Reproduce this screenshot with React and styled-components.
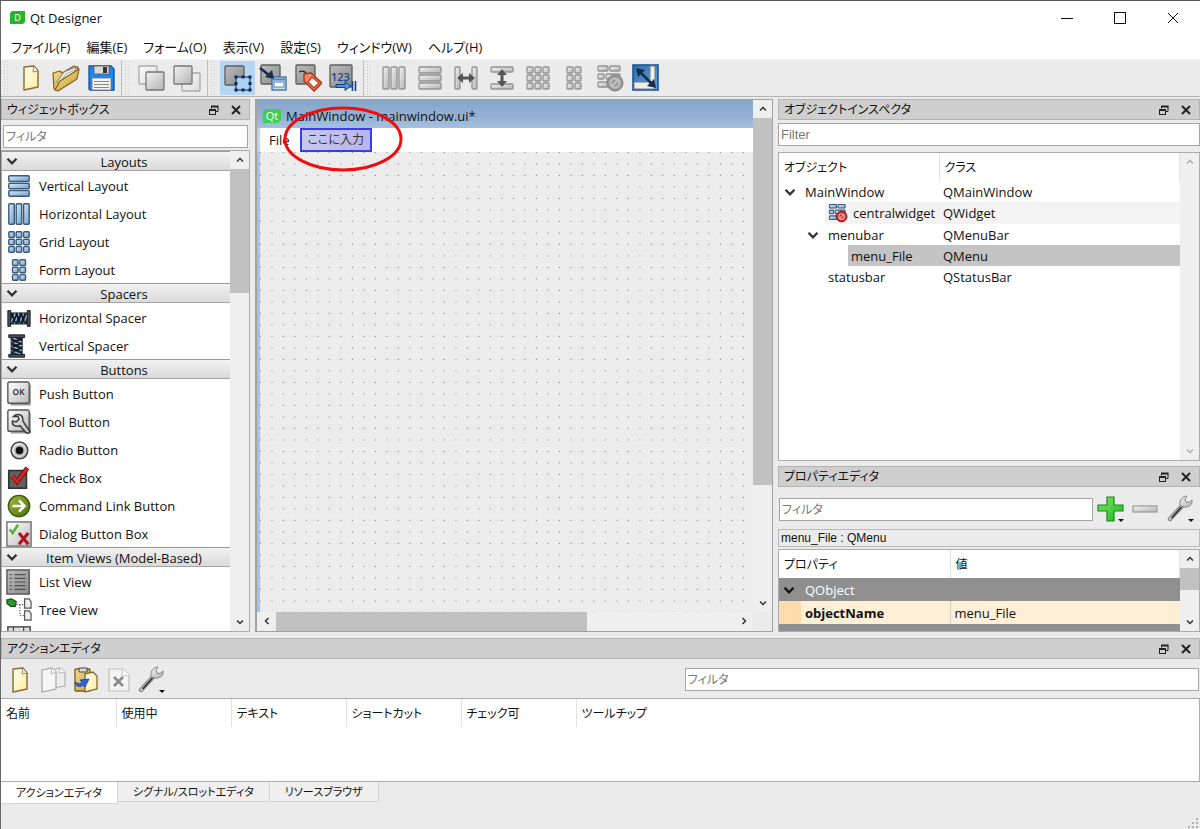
import React from 'react'
import styled, { createGlobalStyle, css } from 'styled-components'

const GlobalStyle = createGlobalStyle`
  * {
    box-sizing: border-box;
  }

  body {
    margin: 0;
    background: #ebebeb;
    color: #111;
    font-family: 'Open Sans', 'Noto Sans CJK JP', sans-serif;
    font-size: 13px;
    line-height: 20px;
    font-feature-settings: 'palt';
  }

  button, input, table {
    font: inherit;
    color: inherit;
    font-feature-settings: inherit;
  }

  button {
    padding: 0;
    border: none;
    background: none;
  }

  svg {
    display: block;
    flex: none;
  }
`

/* ---------- shell ---------- */

const Shell = styled.div`
  display: flex;
  flex-direction: column;
  height: 100vh;
  border-top: 1px solid #555;
  border-left: 1px solid #666;
  overflow: hidden;
`

const TitleBar = styled.header`
  display: flex;
  align-items: center;
  flex: none;
  gap: 5px;
  height: 33px;
  padding: 0 3px 0 9px;
  background: #fff;

  > h1 {
    flex: 1;
    margin: 0;
    font-size: 13px;
    font-weight: 400;
  }
`

const WindowButton = styled.button`
  display: flex;
  align-items: center;
  justify-content: center;
  width: 48px;
  height: 32px;
`

const MenuBar = styled.nav`
  display: flex;
  align-items: center;
  flex: none;
  gap: 16px;
  height: 25px;
  padding-left: 10px;
  background: #fff;
`

const ToolBar = styled.div`
  display: flex;
  flex: none;
  height: 38px;
  border-top: 1px solid #f4f4f4;
  border-bottom: 1px solid #b4b4b4;
`

const ToolButton = styled.button`
  display: flex;
  align-items: center;
  justify-content: center;
  width: 36px;
  height: 34px;
  background: ${p => (p.$checked ? '#b5d5f2' : 'transparent')};
`

const ToolGroup = styled.div`
  display: flex;
  align-items: center;
  padding: 0 3px 0 12px;
  border-right: ${p => (p.$last ? 'none' : '1px solid #bdbdbd')};
  background: radial-gradient(circle, #c4c4c4 1px, transparent 1px) 2px 0 / 3px 3px repeat-y,
    radial-gradient(circle, #d0d0d0 1px, transparent 1px) 5px 0 / 3px 3px repeat-y;

  > button {
    width: ${p => (p.$last ? 36 : 35)}px;
  }
`

const Workspace = styled.main`
  display: flex;
  flex: 1;
  min-height: 0;
  gap: 5px;
  padding-top: 2px;
`

/* ---------- docks ---------- */

const Dock = styled.section`
  display: flex;
  flex-direction: column;
  min-height: 0;
  flex: ${p => (p.$grow ? '1' : 'none')};
`

const DockTitle = styled.div`
  display: flex;
  align-items: center;
  flex: none;
  height: 21px;
  padding: 1px 2px 0 5px;
  border: 1px solid #b3b3b3;
  background: #cfcfcf;

  > h2 {
    flex: 1;
    margin: 0;
    font-size: 12px;
    font-weight: 400;
  }

  > button {
    display: flex;
    align-items: center;
    justify-content: center;
    width: 24px;
    height: 18px;
    margin-right: -1px;
  }
`

const Filter = styled.input`
  display: block;
  flex: ${p => (p.$grow ? '1' : 'none')};
  width: auto;
  min-width: 0;
  height: 23px;
  padding: 0 2px;
  border: 1px solid #a5a5a5;
  border-radius: 0;
  background: #fff;
  font-family: ${p => (p.$plain ? "'Liberation Sans', sans-serif" : 'inherit')};
  font-size: ${p => (p.$plain ? '13px' : '12px')};

  &::placeholder {
    color: #777;
    opacity: 1;
  }
`

const Frame = styled.div`
  display: flex;
  flex: ${p => (p.$grow ? '1' : 'none')};
  min-height: 0;
  border: 1px solid #ababab;
  background: #fff;
  overflow: hidden;
`

/* ---------- scroll bars ---------- */

const ScrollTrack = styled.div`
  display: flex;
  flex: none;
  flex-direction: ${p => (p.$horizontal ? 'row' : 'column')};
  ${p => (p.$horizontal ? 'height: 19px;' : 'width: 19px;')}
  background: #efefef;

  > button {
    display: flex;
    align-items: center;
    justify-content: center;
    flex: none;
    width: 19px;
    height: 18px;
  }

  > .thumb {
    flex: ${p => p.$size};
    background: #c1c1c1;
  }

  > .rest {
    flex: ${p => 100 - p.$size};
  }
`

const turns = { down: 0, up: 180, left: 90, right: 270 }

function Chevron ({ to = 'down', size = 8, color = '#333', weight = 2 }) {
  return (
    <svg width={size} height={size} viewBox='0 0 8 8'>
      <path
        d='M1 2.5 L4 5.5 L7 2.5'
        transform={`rotate(${turns[to]} 4 4)`}
        fill='none'
        stroke={color}
        strokeWidth={weight}
      />
    </svg>
  )
}

const Branch = ({ color }) => <Chevron size={12} color={color} weight={1.6} />

function ScrollBar ({ horizontal, size = 0, disabled }) {
  const color = disabled ? '#aaa' : '#333'
  return (
    <ScrollTrack $horizontal={horizontal} $size={size}>
      <button aria-label={horizontal ? 'Scroll left' : 'Scroll up'} disabled={disabled}>
        <Chevron to={horizontal ? 'left' : 'up'} color={color} weight={1.5} />
      </button>
      {size > 0 && <div className='thumb' />}
      <div className='rest' />
      <button aria-label={horizontal ? 'Scroll right' : 'Scroll down'} disabled={disabled}>
        <Chevron to={horizontal ? 'right' : 'down'} color={color} weight={1.5} />
      </button>
    </ScrollTrack>
  )
}

/* ---------- icons ---------- */

const gradients = {
  gray: ['#f4f4f4', '#b2b2b2'],
  pale: ['#fbfbfb', '#dcdcdc'],
  steel: ['#bcbcbc', '#8c8c8c'],
  blue: ['#d9ecfb', '#6f9fcb'],
  paper: ['#fffef0', '#ffee9c'],
  gold: ['#f7e08c', '#c99a35'],
  green: ['#7fe860', '#1fb51f'],
  olive: ['#a2bd3c', '#4c6d10'],
  key: ['#ffffff', '#b9b9b9'],
  navy: ['#2f6cae', '#69a5df']
}

function Gradients () {
  return (
    <svg width='0' height='0' style={{ position: 'absolute' }} aria-hidden='true'>
      <defs>
        {Object.entries(gradients).map(([name, [from, to]]) => (
          <linearGradient key={name} id={name} x1='0' y1='0' x2='1' y2='1'>
            <stop offset='0' stopColor={from} />
            <stop offset='1' stopColor={to} />
          </linearGradient>
        ))}
      </defs>
    </svg>
  )
}

function Icon ({ size = 28, box = 28, children }) {
  return (
    <svg width={size} height={size} viewBox={`0 0 ${box} ${box}`} aria-hidden='true'>
      {children}
    </svg>
  )
}

// Bars and cells shared by the toolbar and the widget box
function Blocks ({ rects, tone = 'gray' }) {
  return rects.map(([x, y, w, h]) => (
    <rect
      key={`${x}-${y}`}
      x={x}
      y={y}
      width={w}
      height={h}
      rx='1'
      fill={`url(#${tone})`}
      stroke={tone === 'gray' ? '#929292' : '#3d5977'}
      strokeWidth={tone === 'gray' ? 1.3 : 1.5}
    />
  ))
}

const columns = [[3, 3, 6, 22], [11, 3, 6, 22], [19, 3, 6, 22]]
const lines = [[3, 3, 22, 6], [3, 11, 22, 6], [3, 19, 22, 6]]
const cells = [3, 11, 19].flatMap(y => [3, 11, 19].map(x => [x, y, 6, 6]))
const pairs = [3, 11, 19].flatMap(y => [7, 15].map(x => [x, y, 6, 6]))
const broken = [[2, 2, 10, 5], [14, 2, 10, 5], [2, 10, 6, 5], [10, 10, 14, 5], [2, 18, 10, 5]]

function Square ({ x, y, size, tone = 'steel', stroke = '#5c5c5c' }) {
  return <rect x={x} y={y} width={size} height={size} rx='1' fill={`url(#${tone})`} stroke={stroke} strokeWidth='1.3' />
}

function Page ({ tone = 'paper', stroke = '#8a6a33', x = 0 }) {
  return (
    <g transform={`translate(${x} 0)`} stroke={stroke} strokeLinejoin='round'>
      <path d='M7 3 L17 2 L21 7 V23 L7 26 Z' fill={`url(#${tone})`} strokeWidth='1.4' />
      <path d='M17 2 L16 8 L21 7 Z' fill='#fff' strokeWidth='0.8' />
    </g>
  )
}

function Wrench () {
  return (
    <g strokeLinecap='round' fill='none'>
      <path d='M3 24 L15 11' stroke='#777' strokeWidth='4.4' />
      <path d='M3 24 L15 11' stroke='#c4c4c4' strokeWidth='2.6' />
      <path d='M5 22.5 L14 12.5' stroke='#2b2b2b' strokeWidth='1.6' />
      <path
        d='M13 10 C12 5 16 1 20 1 L18 4 L19 7 L22 7.5 L25 5 C26 9 22 13 17 12 Z'
        fill='url(#gray)'
        stroke='#858585'
        strokeWidth='1'
      />
    </g>
  )
}

const MenuMark = () => <path d='M21 24 H27 L24 27 Z' fill='#111' />

const NewIcon = () => <Icon><Page /></Icon>

const OpenIcon = () => (
  <Icon>
    <g strokeLinejoin='round' strokeWidth='1.2' stroke='#86601d'>
      <path d='M1 9 L8 7 L10 9 L22 2 L26 3 L24 12 L5 26 L2 25 Z' fill='url(#gold)' />
      <path d='M5 18 L12 8 L24 3 L23 10 L8 21 Z' fill='#f5f5f5' stroke='#8b8b8b' />
      <path d='M7 20 L14 10 L25 5' fill='none' stroke='#b5b5b5' />
      <path d='M3 26 L8 17 L27 5 L25 15 L6 27 Z' fill='url(#gold)' />
    </g>
  </Icon>
)

const SaveIcon = () => (
  <Icon>
    <path d='M2 2 H24 L27 5 V26 H3 L2 25 Z' fill='#2185ee' stroke='#154f9e' strokeWidth='1.3' />
    <rect x='7' y='2' width='15' height='8' fill='#d9d9d9' stroke='#555' strokeWidth='0.8' />
    <rect x='16' y='3' width='4' height='6' fill='#333' />
    <rect x='5' y='14' width='19' height='12' fill='#f3f3f3' stroke='#777' strokeWidth='0.8' />
    <path d='M7 17.5 H22 M7 20.5 H22 M7 23.5 H22' stroke='#888' strokeWidth='1.2' />
  </Icon>
)

const ToBackIcon = () => (
  <Icon>
    <Square x={1} y={2} size={18} tone='pale' stroke='#aaa' />
    <Square x={8} y={8} size={18} tone='gray' stroke='#777' />
  </Icon>
)

const ToFrontIcon = () => (
  <Icon>
    <Square x={9} y={9} size={18} tone='pale' stroke='#aaa' />
    <Square x={1} y={2} size={18} tone='gray' stroke='#777' />
  </Icon>
)

const EditWidgetsIcon = () => (
  <Icon>
    <Square x={1} y={2} size={19} />
    <rect x='12' y='13' width='14' height='13' fill='#a9d1f5' stroke='#1d4373' strokeWidth='1.2' />
    {[12, 19, 26].flatMap(x => [13, 19.5, 26].map(y => (
      (x !== 19 || y !== 19.5) && <rect key={`${x}-${y}`} x={x - 1.5} y={y - 1.5} width='3' height='3' fill='#10294a' />
    )))}
  </Icon>
)

const SignalsIcon = () => (
  <Icon>
    <Square x={2} y={1} size={19} />
    <rect x='13' y='13' width='14' height='13' fill='#c4def5' stroke='#41699c' strokeWidth='1.3' />
    <rect x='15' y='18' width='10' height='5' fill='#fff' stroke='#5685b9' strokeWidth='1' />
    <path d='M14 15.5 H26' stroke='#4884c8' strokeWidth='2' />
    <path d='M1 4 L11 12' stroke='#172d4c' strokeWidth='2.6' />
    <path d='M15 15 L6 13 L13 6 Z' fill='#172d4c' />
  </Icon>
)

const BuddiesIcon = () => (
  <Icon>
    <Square x={2} y={1} size={19} />
    <path d='M5 8 C9 6 13 8 14 13' fill='none' stroke='#222' strokeWidth='1.2' />
    <path d='M10 10 L17 9 L28 19 L20 27 L10 17 Z' fill='#f0885c' stroke='#a83218' strokeWidth='1.3' />
    <path d='M18 13 L25 19 L20 24 L14 18 Z' fill='#fff' stroke='#db3b20' strokeWidth='1.5' />
  </Icon>
)

const TabOrderIcon = () => (
  <Icon>
    <Square x={1} y={1} size={22} />
    <text x='2' y='17' fontSize='11' fontFamily='Open Sans, sans-serif' fontWeight='600' fill='#144a8c'>123</text>
    <path d='M7 20.5 H16 V17.5 L22 22 L16 26.5 V23.5 H7 Z' fill='#4c92e0' stroke='#14437d' strokeWidth='1' />
    <path d='M23.5 17 V27 M26.5 17 V27' stroke='#14437d' strokeWidth='1.6' />
  </Icon>
)

const SplitHIcon = () => (
  <Icon>
    <Blocks rects={[[3, 3, 5, 22], [20, 3, 5, 22]]} />
    <path d='M5 14 L11 9 V12.5 H17 V9 L23 14 L17 19 V15.5 H11 V19 Z' fill='#555' />
  </Icon>
)

const SplitVIcon = () => (
  <Icon>
    <Blocks rects={[[3, 3, 22, 5], [3, 20, 22, 5]]} />
    <path d='M14 5 L19 11 H15.5 V17 H19 L14 23 L9 17 H12.5 V11 H9 Z' fill='#555' />
  </Icon>
)

const BreakIcon = () => (
  <Icon>
    <Blocks rects={broken} />
    <circle cx='19' cy='19' r='8' fill='#999' stroke='#808080' />
    <circle cx='19' cy='19' r='4.5' fill='none' stroke='#c2c2c2' strokeWidth='2' />
    <path d='M16 22 L22 16' stroke='#c2c2c2' strokeWidth='2' />
  </Icon>
)

const AdjustIcon = () => (
  <Icon>
    <rect x='1' y='1' width='25' height='25' fill='url(#navy)' stroke='#1b5597' strokeWidth='1.6' />
    <path d='M18 2 H23 V25 H2 V18 H18 Z' fill='#eee' stroke='#777' strokeWidth='1' />
    <path d='M8 8 L20 20' stroke='#14304f' strokeWidth='2.6' />
    <path d='M4 4 L13 6 L6 13 Z M24 24 L15 22 L22 15 Z' fill='#14304f' />
  </Icon>
)

const CopyIcon = () => (
  <Icon>
    <path d='M13 4 L21 2 L26 6 V20 L13 22 Z' fill='#ededed' stroke='#b0b0b0' strokeWidth='1.2' />
    <path d='M21 2 L20 7 L26 6' fill='#fafafa' stroke='#b0b0b0' strokeWidth='0.8' />
    <path d='M3 4 L13 2 L17 6 V23 L3 26 Z' fill='#f5f5f5' stroke='#a5a5a5' strokeWidth='1.2' />
    <path d='M13 2 L12 8 L17 6' fill='#fff' stroke='#a5a5a5' strokeWidth='0.8' />
  </Icon>
)

const PasteIcon = () => (
  <Icon>
    <rect x='3' y='3' width='15' height='22' rx='1' fill='url(#gold)' stroke='#7b5920' strokeWidth='1.3' />
    <path d='M7 2 H15 V6 H7 Z' fill='#ddd' stroke='#444' />
    <path d='M13 8 L21 6 L25 10 V23 L13 26 Z' fill='url(#paper)' stroke='#8a6a33' strokeWidth='1.3' />
    <path d='M3 16 C4 22 9 21 11 19 L13 21 L17 13 L8 14 L10 16 C8 18 6 18 3 16 Z' fill='#2c63e0' stroke='#143b96' strokeWidth='0.8' />
  </Icon>
)

const DeleteIcon = () => (
  <Icon>
    <path d='M4 3 H18 L24 9 V25 H4 Z' fill='#f3f3f3' stroke='#bdbdbd' strokeWidth='1.2' />
    <path d='M18 3 L17 10 L24 9' fill='#fff' stroke='#c8c8c8' />
    <path d='M9 11 L18 20 M18 11 L9 20' stroke='#8a8a8a' strokeWidth='2.6' />
  </Icon>
)

const ConfigIcon = () => <Icon><Wrench /><MenuMark /></Icon>

const AddIcon = () => (
  <Icon>
    <path d='M10 2 H17 V10 H26 V16 H17 V26 H10 V16 H1 V10 H10 Z' fill='url(#green)' stroke='#168a1a' strokeWidth='1.2' />
    <MenuMark />
  </Icon>
)

const RemoveIcon = () => (
  <Icon>
    <rect x='1' y='11' width='24' height='6' fill='url(#gray)' stroke='#999' strokeWidth='1.2' />
  </Icon>
)

const BlocksIcon = ({ rects, tone, size }) => <Icon size={size}><Blocks rects={rects} tone={tone} /></Icon>

const Spring = () => (
  <g>
    <path d='M5 8 H23 V21 H5 Z' fill='#1d2733' />
    <path d='M5 19 L10 9 M9 20 L14 9 M14 20 L19 9 M19 20 L23 10' stroke='#8fb4da' strokeWidth='1.5' />
    <path d='M6 9 L10 19 M11 9 L15 19 M16 9 L20 19' stroke='#0a0d12' strokeWidth='1.5' />
    <path d='M2 6 H5 V23 H2 Z M23 6 H26 V23 H23 Z' fill='#4c4f52' stroke='#16181a' />
  </g>
)

const HSpacerIcon = () => <Icon size={26}><Spring /></Icon>

const VSpacerIcon = () => (
  <Icon size={26}>
    <g transform='translate(-2 0) rotate(90 14 14)'><Spring /></g>
  </Icon>
)

const Key = () => (
  <g>
    <path d='M5 25.5 H26 V4' fill='none' stroke='#999' strokeWidth='1.5' />
    <rect x='2' y='1' width='23' height='23' rx='2' fill='url(#key)' stroke='#555' strokeWidth='1.5' />
  </g>
)

const PushIcon = () => (
  <Icon size={26}>
    <Key />
    <text x='13.5' y='15' textAnchor='middle' fontSize='9' fontWeight='600' fontFamily='Open Sans, sans-serif' fill='#222'>OK</text>
  </Icon>
)

const ToolIcon = () => (
  <Icon size={26}>
    <Key />
    <path
      d='M8 8 C12 4 19 6 18 12 C19 15 23 20 26 24 C25 27 22 26 21 25 L15 18 C10 20 6 17 7 13 L11 14 L14 11 L13 8 Z'
      fill='url(#gray)'
      stroke='#3c3c3c'
      strokeWidth='1.6'
    />
  </Icon>
)

const RadioIcon = () => (
  <Icon size={26}>
    <circle cx='14.5' cy='14.5' r='9' fill='url(#gray)' stroke='#444' strokeWidth='1.6' />
    <circle cx='14.5' cy='14.5' r='6' fill='#aaa' stroke='#eee' strokeWidth='0.8' />
    <circle cx='14.5' cy='14.5' r='4' fill='#111' />
  </Icon>
)

const CheckIcon = () => (
  <Icon size={26}>
    <rect x='3' y='6' width='19' height='19' fill='#606060' stroke='#333' strokeWidth='1.8' />
    <path d='M7 12 L12 18 L23 3' fill='none' stroke='#7c0e0e' strokeWidth='5' />
    <path d='M7 12 L12 18 L23 3' fill='none' stroke='#d92525' strokeWidth='3' />
  </Icon>
)

const CommandIcon = () => (
  <Icon size={26}>
    <circle cx='14' cy='14' r='11.5' fill='url(#olive)' stroke='#3c5410' strokeWidth='1.5' />
    <path d='M7 14 H19 M14 8 L20 14 L14 20' fill='none' stroke='#fff' strokeWidth='2.8' />
  </Icon>
)

const DialogIcon = () => (
  <Icon size={26}>
    <rect x='1' y='1' width='26' height='26' fill='url(#key)' stroke='#777' strokeWidth='1.6' />
    <path d='M4 9 L7 13 L13 4' fill='none' stroke='#4fb52c' strokeWidth='2.6' />
    <path d='M14 13 L24 25 M24 13 L14 25' stroke='#b31320' strokeWidth='3.4' />
  </Icon>
)

const ListIcon = () => (
  <Icon size={26}>
    <rect x='1' y='1' width='24' height='26' fill='url(#steel)' stroke='#555' strokeWidth='1.5' />
    <path
      d='M4 6 H6 M4 10 H6 M4 14 H6 M4 18 H6 M4 22 H6 M9 6 H21 M9 10 H21 M9 14 H21 M9 18 H21 M9 22 H21'
      stroke='#505050'
      strokeWidth='1.3'
    />
  </Icon>
)

const TreeIcon = () => (
  <Icon size={26}>
    <path d='M1 3 L6 2 L11 5 L10 10 L5 10 L1 7 Z' fill='#2b9a2b' stroke='#154f15' strokeWidth='1.3' />
    <path d='M11 8 H20 M15 8 V20 M15 20 H20' stroke='#444' strokeDasharray='1.5 1.5' fill='none' />
    <path d='M20 2 H25 L27 5 V12 H20 Z M20 15 H25 L27 18 V25 H20 Z' fill='#eee' stroke='#555' strokeWidth='1.3' />
  </Icon>
)

const TableIcon = () => (
  <Icon size={26}>
    <rect x='2' y='2' width='24' height='24' fill='#ddd' stroke='#444' strokeWidth='1.5' />
    <path d='M2 7 H26 M2 13 H26 M8 2 V26 M19 2 V26' stroke='#444' strokeWidth='1.3' />
  </Icon>
)

const BrokenLayoutIcon = () => (
  <Icon size={20}>
    <Blocks rects={broken} tone='blue' />
    <circle cx='19' cy='19' r='7.5' fill='#ca2a26' stroke='#7f1515' strokeWidth='1.3' />
    <circle cx='19' cy='19' r='4' fill='none' stroke='#e9b9b4' strokeWidth='1.6' />
    <path d='M16 22 L22 16' stroke='#e9b9b4' strokeWidth='1.6' />
  </Icon>
)

const FloatIcon = () => (
  <svg width='11' height='11' viewBox='0 0 11 11' fill='none' stroke='#222'>
    <path d='M3.5 3.5 V1.5 H10 V6.5 H7.5' />
    <path d='M3 1.5 H10.5' strokeWidth='2' />
    <rect x='1.5' y='4.5' width='6' height='5' />
    <path d='M1 5 H8' strokeWidth='2' />
  </svg>
)

const CloseIcon = () => (
  <svg width='10' height='10' viewBox='0 0 10 10'>
    <path d='M1 1 L9 9 M9 1 L1 9' stroke='#222' strokeWidth='2' />
  </svg>
)

function DockHeader ({ children }) {
  return (
    <DockTitle>
      <h2>{children}</h2>
      <button aria-label='Float'><FloatIcon /></button>
      <button aria-label='Close'><CloseIcon /></button>
    </DockTitle>
  )
}

/* ---------- widget box ---------- */

const LeftColumn = styled.div`
  display: flex;
  flex: 0 0 249px;
  flex-direction: column;

  > section > input {
    margin: 5px 2px 2px;
  }
`

const WidgetList = styled.div`
  flex: 1;
  min-width: 0;
  overflow: hidden;
`

const Category = styled.button`
  display: flex;
  align-items: center;
  width: 100%;
  height: 20px;
  padding: 0 4px;
  border-top: 1px solid #999;
  border-bottom: 1px solid #a4a4a4;
  background: linear-gradient(#f2f2f2, #dadada);

  > span {
    flex: 1;
    padding-left: 4px;
    padding-top: 2px;
  }
`

const WidgetItem = styled.div`
  display: flex;
  align-items: center;
  gap: 7px;
  height: 28px;
  padding: 1px 0 0 4px;

  > .icon {
    display: flex;
    justify-content: center;
    width: 26px;
  }
`

const categories = [
  ['Layouts', [
    ['Vertical Layout', <BlocksIcon rects={lines} tone='blue' size={26} />],
    ['Horizontal Layout', <BlocksIcon rects={columns} tone='blue' size={26} />],
    ['Grid Layout', <BlocksIcon rects={cells} tone='blue' size={26} />],
    ['Form Layout', <BlocksIcon rects={pairs} tone='blue' size={26} />]
  ]],
  ['Spacers', [
    ['Horizontal Spacer', <HSpacerIcon />],
    ['Vertical Spacer', <VSpacerIcon />]
  ]],
  ['Buttons', [
    ['Push Button', <PushIcon />],
    ['Tool Button', <ToolIcon />],
    ['Radio Button', <RadioIcon />],
    ['Check Box', <CheckIcon />],
    ['Command Link Button', <CommandIcon />],
    ['Dialog Button Box', <DialogIcon />]
  ]],
  ['Item Views (Model-Based)', [
    ['List View', <ListIcon />],
    ['Tree View', <TreeIcon />],
    ['', <TableIcon />]
  ]]
]

function WidgetBox () {
  return (
    <LeftColumn>
      <Dock $grow>
        <DockHeader>ウィジェットボックス</DockHeader>
        <Filter placeholder='フィルタ' aria-label='フィルタ' />
        <Frame $grow>
          <WidgetList>
            {categories.map(([title, items]) => (
              <React.Fragment key={title}>
                <Category>
                  <Branch />
                  <span>{title}</span>
                </Category>
                {items.map(([name, icon]) => (
                  <WidgetItem key={name}>
                    <span className='icon'>{icon}</span>
                    {name}
                  </WidgetItem>
                ))}
              </React.Fragment>
            ))}
          </WidgetList>
          <ScrollBar size={28} />
        </Frame>
      </Dock>
    </LeftColumn>
  )
}

/* ---------- form window ---------- */

const FormArea = styled.div`
  display: flex;
  flex: 1;
  flex-direction: column;
  min-width: 0;
  border: 1px solid #a2a2a2;
  border-left-width: 2px;

  > .row {
    display: flex;
    flex: 1;
    min-height: 0;
  }

  > .bottom {
    display: flex;
    flex: none;
    padding-right: 19px;
  }

  > .bottom > div {
    flex: 1;
  }
`

const FormWindow = styled.div`
  display: flex;
  flex: 1;
  flex-direction: column;
  min-width: 0;
`

const FormTitle = styled.div`
  display: flex;
  align-items: center;
  flex: none;
  gap: 5px;
  height: 28px;
  padding: 4px 0 0 6px;
  background: linear-gradient(#86a6ca, #94b1d3 60%, #a5c1e2);
`

const FormMenu = styled.div`
  position: relative;
  display: flex;
  align-items: center;
  flex: none;
  gap: 10px;
  height: 24px;
  padding-left: 9px;
  border-left: 3px solid #bcd4ee;
  background: #fff;
`

const TypeHere = styled.button`
  height: 24px;
  padding: 0 6px;
  border: 2px solid #3a3aee;
  background: linear-gradient(100deg, #c9c9ee, #b5b5ee);
  color: #333;
  font-size: 12px;
`

const Highlight = styled.svg`
  position: absolute;
  top: -22px;
  left: 22px;
  z-index: 1;
  pointer-events: none;
`

const Canvas = styled.div`
  flex: 1;
  min-height: 0;
  border-left: 3px solid #a3c3e8;
  background: #ececec;

  > svg {
    width: 100%;
    height: 100%;
  }
`

function FormEditor () {
  return (
    <FormArea>
      <div className='row'>
        <FormWindow>
          <FormTitle>
            <svg width='18' height='14' viewBox='0 0 18 14'>
              <path d='M3 0 H18 V11 L15 14 H0 V3 Z' fill='#41cd52' />
              <text x='9' y='11' textAnchor='middle' fontSize='11' fontFamily='Open Sans, sans-serif' fill='#fff'>Qt</text>
            </svg>
            MainWindow - mainwindow.ui*
          </FormTitle>
          <FormMenu>
            <span>File</span>
            <TypeHere>ここに入力</TypeHere>
            <Highlight width='122' height='66' viewBox='0 0 122 66'>
              <ellipse cx='61' cy='33' rx='58' ry='31' fill='none' stroke='#f40b0b' strokeWidth='3' />
            </Highlight>
          </FormMenu>
          <Canvas>
            <svg>
              <pattern id='grid' width='10' height='10' patternUnits='userSpaceOnUse' patternTransform='translate(1 1) scale(1.15)'>
                <rect x='9' y='9' width='1' height='1' fill='#8e8e8e' />
              </pattern>
              <rect width='100%' height='100%' fill='url(#grid)' />
            </svg>
          </Canvas>
        </FormWindow>
        <ScrollBar size={77} />
      </div>
      <div className='bottom'>
        <ScrollBar horizontal size={68} />
      </div>
    </FormArea>
  )
}

/* ---------- object inspector and property editor ---------- */

const RightColumn = styled.div`
  display: flex;
  flex: 0 0 422px;
  flex-direction: column;
  gap: 5px;
`

const InspectorFilter = styled.div`
  display: flex;
  padding: 3px 0 6px;
`

const Table = styled.table`
  flex: 1;
  align-self: flex-start;
  width: 100%;
  min-width: 0;
  border-collapse: collapse;
  table-layout: fixed;

  th {
    height: 28px;
    padding: 2px 4px 0 5px;
    border-right: 1px solid #e2e2e2;
    font-size: 12px;
    font-weight: 400;
    text-align: left;
  }

  td {
    padding: 0;
    white-space: nowrap;
  }
`

const TreeCell = styled.div`
  display: flex;
  height: ${p => p.$height}px;

  > .branch {
    display: flex;
    align-items: center;
    justify-content: flex-end;
    flex: none;
    width: ${p => p.$depth * 23}px;
    padding-right: 6px;
  }

  > .name {
    display: flex;
    align-items: center;
    flex: 1;
    gap: 5px;
    padding-left: 3px;
    background: ${p => p.$fill};
  }
`

const ClassCell = styled.td`
  && {
    padding-left: 4px;
    background: ${p => p.$fill};
  }
`

const objects = [
  { name: 'MainWindow', type: 'QMainWindow', depth: 1, open: true, height: 21 },
  { name: 'centralwidget', type: 'QWidget', depth: 2, icon: true, height: 22, fill: '#f3f3f3' },
  { name: 'menubar', type: 'QMenuBar', depth: 2, open: true, height: 21 },
  { name: 'menu_File', type: 'QMenu', depth: 3, height: 21, fill: '#c4c4c4' },
  { name: 'statusbar', type: 'QStatusBar', depth: 2, height: 21 }
]

function ObjectInspector () {
  return (
    <Dock $grow>
      <DockHeader>オブジェクトインスペクタ</DockHeader>
      <InspectorFilter>
        <Filter $grow $plain placeholder='Filter' aria-label='Filter' />
      </InspectorFilter>
      <Frame $grow>
        <Table>
          <colgroup>
            <col width='160' />
            <col />
          </colgroup>
          <thead>
            <tr>
              <th>オブジェクト</th>
              <th>クラス</th>
            </tr>
          </thead>
          <tbody>
            {objects.map(({ name, type, depth, open, icon, height, fill }) => (
              <tr key={name}>
                <td>
                  <TreeCell $depth={depth} $height={height} $fill={fill}>
                    <span className='branch'>{open && <Branch />}</span>
                    <span className='name'>
                      {icon && <BrokenLayoutIcon />}
                      {name}
                    </span>
                  </TreeCell>
                </td>
                <ClassCell $fill={fill}>{type}</ClassCell>
              </tr>
            ))}
          </tbody>
        </Table>
        <ScrollBar disabled />
      </Frame>
    </Dock>
  )
}

const PropertyTools = styled.div`
  display: flex;
  align-items: center;
  height: 42px;
  padding: 2px 2px 0 1px;

  > button {
    width: 35px;
  }
`

const ObjectLabel = styled.div`
  height: 18px;
  margin-bottom: 2px;
  padding: 0 2px;
  border: 1px solid #b9b9b9;
  font-family: 'Liberation Sans', sans-serif;
  font-size: 12px;
  line-height: 17px;
`

const propertyGroup = css`
  background: #8f8f8f;
  color: #fff;
`

const PropertyRow = styled.tr`
  height: 23px;
  ${p => p.$group && propertyGroup}
  ${p => p.$tinted && 'background: #ffefd7;'}

  > th[scope='row'] {
    height: 23px;
    padding: 0;
    border: none;
    font-size: 13px;
    font-weight: ${p => (p.$group ? 400 : 700)};
  }

  > th > div {
    display: flex;
    align-items: center;
    height: 23px;
  }

  .gutter {
    display: flex;
    align-items: center;
    align-self: stretch;
    width: 22px;
    margin-right: 4px;
    padding-left: 4px;
    background: ${p => (p.$tinted ? '#ffdcab' : 'transparent')};
  }

  > td {
    padding-left: 4px;
    border-left: 1px solid #d9cdbb;
  }
`

const PropertyFrame = styled(Frame)`
  height: 83px;
`

function PropertyEditor () {
  return (
    <Dock>
      <DockHeader>プロパティエディタ</DockHeader>
      <PropertyTools>
        <Filter $grow placeholder='フィルタ' aria-label='フィルタ' />
        <ToolButton aria-label='Add'><AddIcon /></ToolButton>
        <ToolButton aria-label='Remove'><RemoveIcon /></ToolButton>
        <ToolButton aria-label='Configure'><ConfigIcon /></ToolButton>
      </PropertyTools>
      <ObjectLabel>menu_File : QMenu</ObjectLabel>
      <PropertyFrame>
        <Table>
          <colgroup>
            <col width='171' />
            <col />
          </colgroup>
          <thead>
            <tr>
              <th>プロパティ</th>
              <th>値</th>
            </tr>
          </thead>
          <tbody>
            <PropertyRow $group>
              <th scope='row' colSpan={2}>
                <div>
                  <span className='gutter'><Branch color='#111' /></span>
                  QObject
                </div>
              </th>
            </PropertyRow>
            <PropertyRow $tinted>
              <th scope='row'>
                <div>
                  <span className='gutter' />
                  objectName
                </div>
              </th>
              <td>menu_File</td>
            </PropertyRow>
            <PropertyRow $group>
              <th scope='row' colSpan={2} />
            </PropertyRow>
          </tbody>
        </Table>
        <ScrollBar size={48} />
      </PropertyFrame>
    </Dock>
  )
}

/* ---------- action editor ---------- */

const ActionDock = styled(Dock)`
  margin-top: 6px;
`

const ActionTools = styled.div`
  display: flex;
  align-items: center;
  height: 39px;
  padding: 2px 1px 0 2px;

  > .buttons {
    display: flex;
    flex: 0 0 57%;
  }

  > .buttons > button {
    width: 33px;
  }
`

const ActionFrame = styled(Frame)`
  height: 84px;
  border-left: none;

  th:last-child {
    border: none;
  }
`

const Tabs = styled.div`
  display: flex;
  height: 22px;
`

const Tab = styled.button`
  height: ${p => (p.$active ? 22 : 20)}px;
  padding: 0 15px;
  border-right: 1px solid #d4d4d4;
  border-bottom: 1px solid #d4d4d4;
  background: ${p => (p.$active ? '#fff' : '#efefef')};
  font-size: 11px;
`

const StatusBar = styled.footer`
  display: flex;
  align-items: flex-end;
  justify-content: flex-end;
  height: 25px;
  padding: 0 2px 1px 0;
`

const actionColumns = ['名前', '使用中', 'テキスト', 'ショートカット', 'チェック可', 'ツールチップ']

function ActionEditor () {
  return (
    <ActionDock>
      <DockHeader>アクションエディタ</DockHeader>
      <ActionTools>
        <div className='buttons'>
          <ToolButton aria-label='New'><NewIcon /></ToolButton>
          <ToolButton aria-label='Copy' disabled><CopyIcon /></ToolButton>
          <ToolButton aria-label='Paste'><PasteIcon /></ToolButton>
          <ToolButton aria-label='Delete' disabled><DeleteIcon /></ToolButton>
          <ToolButton aria-label='Configure'><ConfigIcon /></ToolButton>
        </div>
        <Filter $grow placeholder='フィルタ' aria-label='フィルタ' />
      </ActionTools>
      <ActionFrame>
        <Table>
          <colgroup>
            {actionColumns.slice(1).map(name => <col key={name} width='115' />)}
            <col />
          </colgroup>
          <thead>
            <tr>{actionColumns.map(name => <th key={name}>{name}</th>)}</tr>
          </thead>
        </Table>
      </ActionFrame>
      <Tabs role='tablist'>
        <Tab role='tab' aria-selected='true' $active>アクションエディタ</Tab>
        <Tab role='tab' aria-selected='false'>シグナル/スロットエディタ</Tab>
        <Tab role='tab' aria-selected='false'>リソースブラウザ</Tab>
      </Tabs>
      <StatusBar>
        <svg width='10' height='10' viewBox='0 0 10 10' fill='#b0b0b0'>
          <path d='M8 0 H10 V2 H8 Z M8 4 H10 V6 H8 Z M8 8 H10 V10 H8 Z M4 4 H6 V6 H4 Z M4 8 H6 V10 H4 Z M0 8 H2 V10 H0 Z' />
        </svg>
      </StatusBar>
    </ActionDock>
  )
}

/* ---------- main window ---------- */

const menus = ['ファイル(F)', '編集(E)', 'フォーム(O)', '表示(V)', '設定(S)', 'ウィンドウ(W)', 'ヘルプ(H)']

const toolGroups = [
  [['New', <NewIcon />], ['Open', <OpenIcon />], ['Save', <SaveIcon />]],
  [['Send to back', <ToBackIcon />], ['Bring to front', <ToFrontIcon />]],
  [
    ['Edit widgets', <EditWidgetsIcon />],
    ['Edit signals/slots', <SignalsIcon />],
    ['Edit buddies', <BuddiesIcon />],
    ['Edit tab order', <TabOrderIcon />]
  ],
  [
    ['Lay out horizontally', <BlocksIcon rects={columns} />],
    ['Lay out vertically', <BlocksIcon rects={lines} />],
    ['Horizontal splitter', <SplitHIcon />],
    ['Vertical splitter', <SplitVIcon />],
    ['Lay out in a grid', <BlocksIcon rects={cells} />],
    ['Lay out in a form', <BlocksIcon rects={pairs} />],
    ['Break layout', <BreakIcon />],
    ['Adjust size', <AdjustIcon />]
  ]
]

export default function App () {
  return (
    <>
      <GlobalStyle />
      <Gradients />
      <Shell>
        <TitleBar>
          <svg width='15' height='13' viewBox='0 0 15 13'>
            <path d='M2 0 H15 V11 L13 13 H0 V2 Z' fill='#23b52c' />
            <text x='7.5' y='10' textAnchor='middle' fontSize='9' fontFamily='Open Sans, sans-serif' fill='#fff'>D</text>
          </svg>
          <h1>Qt Designer</h1>
          <WindowButton aria-label='Minimize'>
            <svg width='12' height='12' viewBox='0 0 12 12'><path d='M0 6.5 H12' stroke='#111' /></svg>
          </WindowButton>
          <WindowButton aria-label='Maximize'>
            <svg width='12' height='12' viewBox='0 0 12 12'><rect x='0.5' y='0.5' width='11' height='11' fill='none' stroke='#111' /></svg>
          </WindowButton>
          <WindowButton aria-label='Close'>
            <svg width='12' height='12' viewBox='0 0 12 12'><path d='M1 1 L11 11 M11 1 L1 11' stroke='#111' /></svg>
          </WindowButton>
        </TitleBar>
        <MenuBar>
          {menus.map(name => <button key={name}>{name}</button>)}
        </MenuBar>
        <ToolBar>
          {toolGroups.map((group, i) => (
            <ToolGroup key={group[0][0]} $last={i === 3}>
              {group.map(([name, icon]) => (
                <ToolButton key={name} aria-label={name} $checked={name === 'Edit widgets'}>
                  {icon}
                </ToolButton>
              ))}
            </ToolGroup>
          ))}
        </ToolBar>
        <Workspace>
          <WidgetBox />
          <FormEditor />
          <RightColumn>
            <ObjectInspector />
            <PropertyEditor />
          </RightColumn>
        </Workspace>
        <ActionEditor />
      </Shell>
    </>
  )
}
